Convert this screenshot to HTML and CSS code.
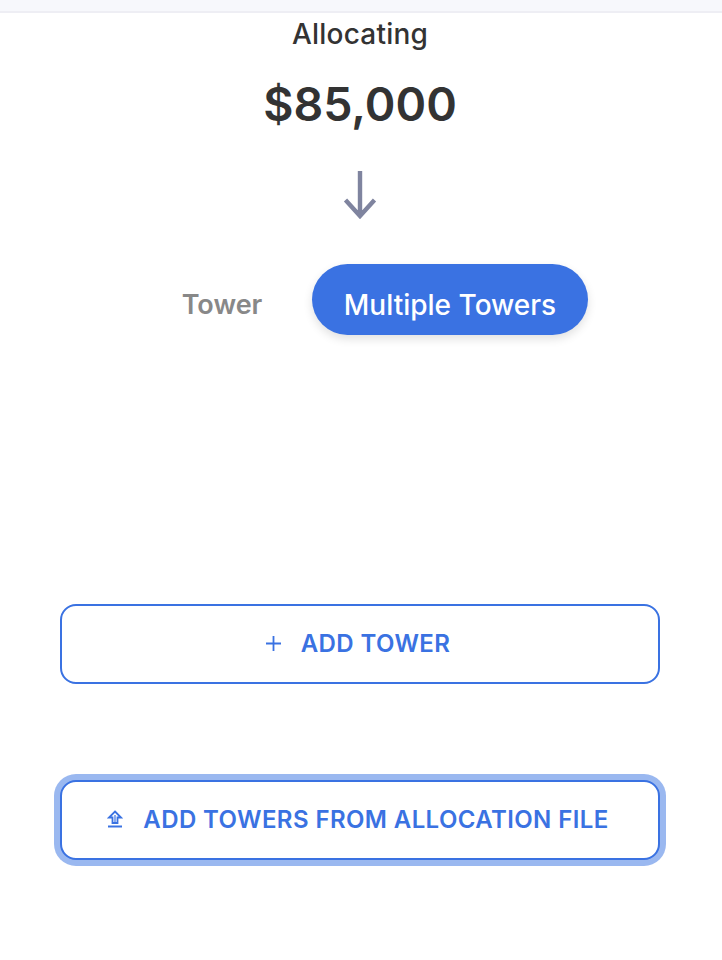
FILE: index.html
```html
<!DOCTYPE html>
<html lang="en">
<head>
  <meta charset="UTF-8" />
  <title>Allocating</title>
  <link rel="stylesheet" href="styles.css">
</head>
<body>

  <div class="top-bar"></div>

  <div class="container">
    <p class="label">Allocating</p>
    <p class="amount">$85,000</p>

    <svg class="arrow" width="34" height="48" viewBox="0 0 34 48" aria-hidden="true">
      <path d="M17 0V45M2.5 29L17 45L31.5 29" fill="none" stroke="#7f849f" stroke-width="4.4"/>
    </svg>

    <div class="tabs">
      <button class="tab">Tower</button>
      <button class="tab active">Multiple Towers</button>
    </div>

    <button class="add-btn first">
      <svg class="plus" width="15" height="15" viewBox="0 0 15 15" aria-hidden="true">
        <path d="M7.5 0V15M0 7.5H15" fill="none" stroke="#3a72e2" stroke-width="1.8"/>
      </svg>
      ADD TOWER
    </button>

    <button class="add-btn focused">
      <svg class="upload" width="16" height="18" viewBox="0 0 16 18" aria-hidden="true">
        <path d="M8 1.5L14 7.5H10.5V13H5.5V7.5H2Z" fill="none" stroke="#3a72e2" stroke-width="1.8"/>
        <path d="M8 5V13" fill="none" stroke="#3a72e2" stroke-width="1.2"/>
        <path d="M1 16.5H15" fill="none" stroke="#3a72e2" stroke-width="2"/>
      </svg>
      ADD TOWERS FROM ALLOCATION FILE
    </button>
  </div>

</body>
</html>
```

FILE: styles.css
```css
body {
  margin: 0;
  font-family: Inter, "Liberation Sans", sans-serif;
  background: #fff;
  color: #333;
}

.top-bar {
  height: 11px;
  background: #f7f8fc;
  border-bottom: 2px solid #eeeef4;
}

.container {
  display: flex;
  flex-direction: column;
  align-items: center;
  padding: 0 62px 100px 60px;
}

.label {
  margin: 4px 0 0;
  font-size: 28px;
  font-weight: 500;
  letter-spacing: 0.2px;
  line-height: 34px;
}

.amount {
  margin: 25px 0 0;
  font-size: 46.5px;
  font-weight: 600;
  line-height: 56px;
}

.arrow {
  display: block;
  margin-top: 39px;
}

.tabs {
  display: flex;
  align-items: center;
  align-self: flex-start;
  margin: 45px 0 0 105px;
  gap: 33px;
}

.tab {
  border: none;
  background: none;
  padding: 10px 0 0;
  font-family: inherit;
  font-size: 27px;
  font-weight: 600;
  color: #888;
  width: 114px;
  height: 71px;
}

.tab.active {
  width: 276px;
  background: #3a72e2;
  color: #fff;
  font-size: 28px;
  font-weight: 500;
  border-radius: 36px;
  box-shadow: 0 4px 10px rgba(0,0,0,0.12);
}

.add-btn {
  display: flex;
  align-items: center;
  justify-content: center;
  box-sizing: border-box;
  width: 600px;
  height: 80px;
  padding: 0 4px 2px 0;
  background: #fff;
  border: 2px solid #3a72e2;
  border-radius: 16px;
  font-family: inherit;
  font-size: 24px;
  font-weight: 600;
  letter-spacing: 0.4px;
  color: #3a72e2;
}

.add-btn.first {
  margin-top: 269px;
}

.add-btn.focused {
  margin-top: 96px;
  box-shadow: 0 0 0 6px #9ab8f0;
}

.plus {
  margin-right: 20px;
}

.upload {
  margin-right: 20px;
}
```
